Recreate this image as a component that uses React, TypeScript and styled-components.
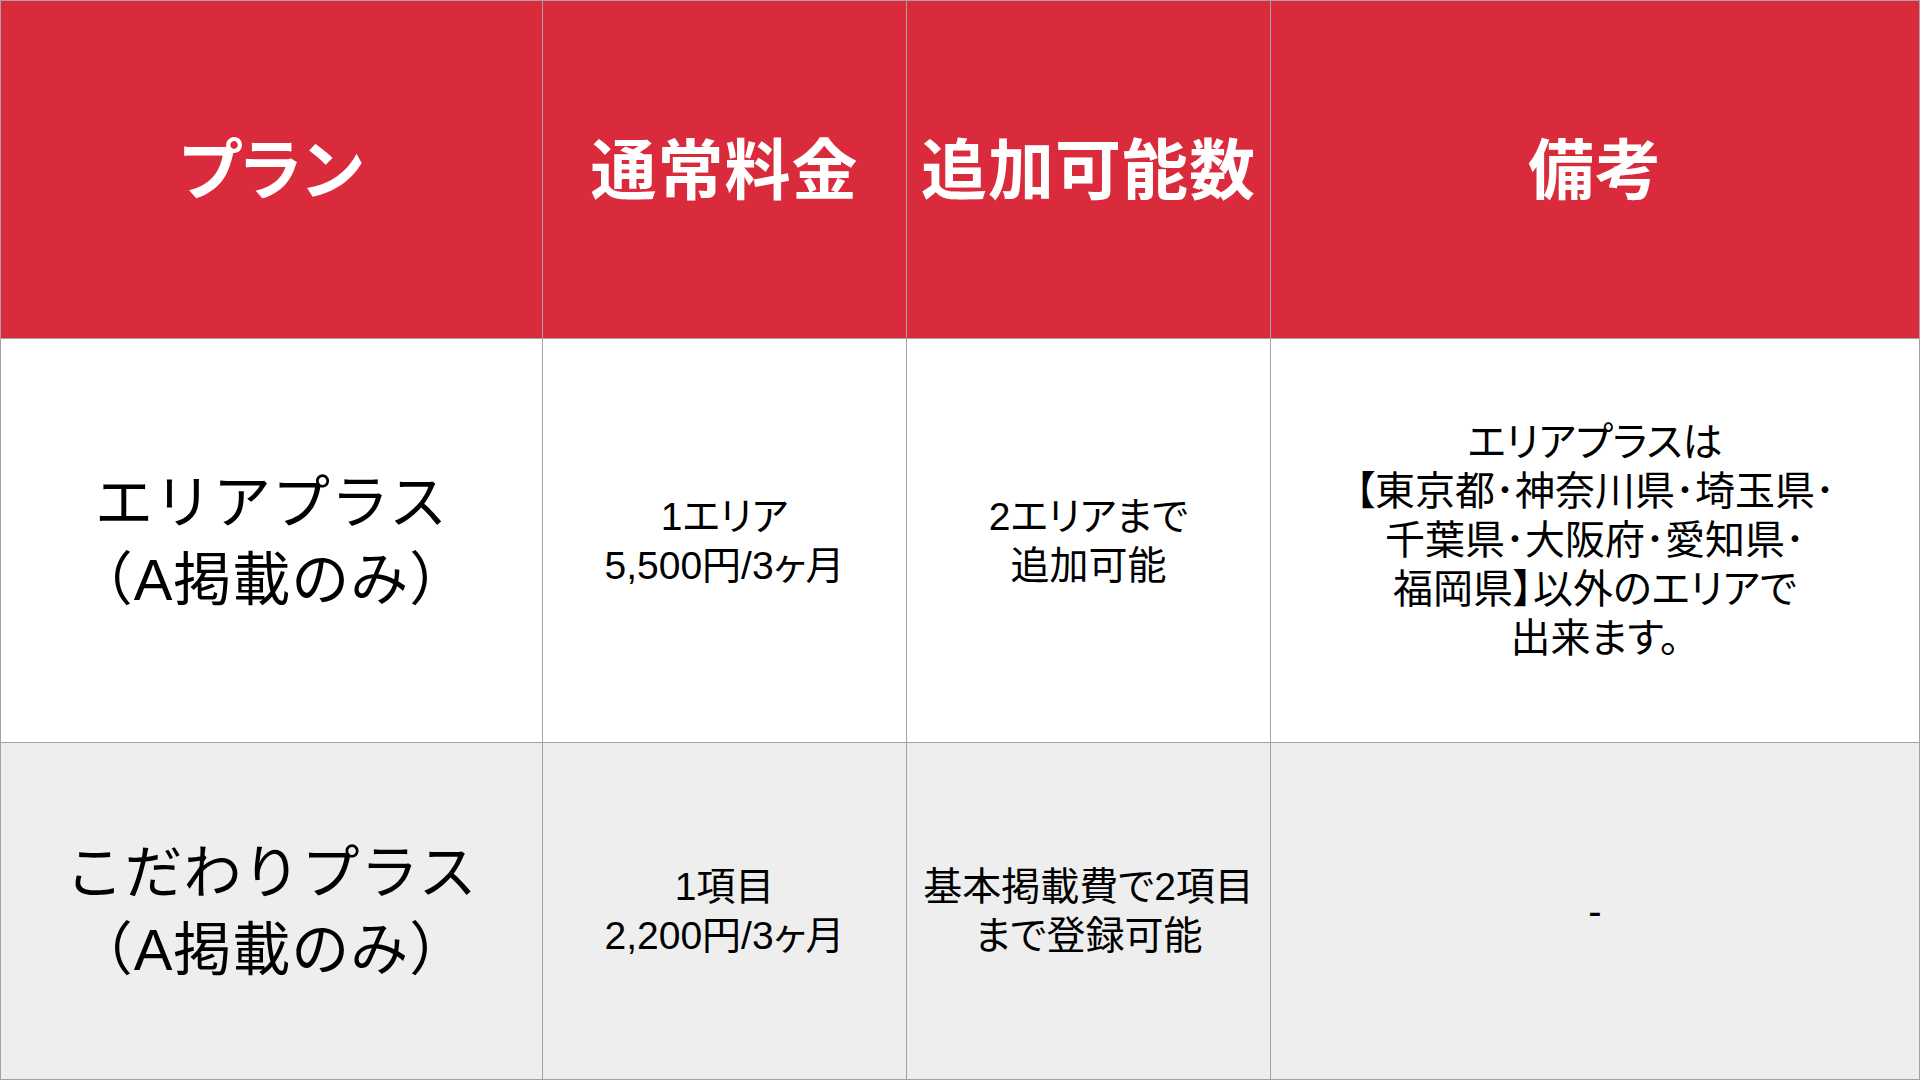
import styled, { createGlobalStyle } from "styled-components"

const GlobalStyle = createGlobalStyle`
  html, body {
    margin: 0;
    padding: 0;
    background: #ffffff;
  }
  body {
    font-family: "Liberation Sans", "Noto Sans CJK JP", sans-serif;
  }
`

interface PlanRow {
  plan: string[]
  price: string[]
  extra: string[]
  note: string[]
}

const rows: PlanRow[] = [
  {
    plan: ["エリアプラス", "（A掲載のみ）"],
    price: ["1エリア", "5,500円/3ヶ月"],
    extra: ["2エリアまで", "追加可能"],
    note: [
      "エリアプラスは",
      "【東京都･神奈川県･埼玉県･",
      "千葉県･大阪府･愛知県･",
      "福岡県】以外のエリアで",
      "出来ます。",
    ],
  },
  {
    plan: ["こだわりプラス", "（A掲載のみ）"],
    price: ["1項目", "2,200円/3ヶ月"],
    extra: ["基本掲載費で2項目", "まで登録可能"],
    note: ["-"],
  },
]

const headers = ["プラン", "通常料金", "追加可能数", "備考"]

const Lines = ({ lines }: { lines: string[] }) => (
  <>
    {lines.map((line) => (
      <Line key={line}>{line}</Line>
    ))}
  </>
)

const App = () => {
  return (
    <>
      <GlobalStyle />
      <Table>
        {headers.map((h) => (
          <HeadCell key={h}>{h}</HeadCell>
        ))}
        {rows.map((row, i) => (
          <Row key={i} striped={i % 2 === 1}>
            <PlanCell>
              <Lines lines={row.plan} />
            </PlanCell>
            <BodyCell>
              <Lines lines={row.price} />
            </BodyCell>
            <BodyCell>
              <Lines lines={row.extra} />
            </BodyCell>
            <NoteCell>
              <Lines lines={row.note} />
            </NoteCell>
          </Row>
        ))}
      </Table>
    </>
  )
}

export default App

const Table = styled.div`
  box-sizing: border-box;
  width: 1920px;
  height: 1080px;
  border: 1px solid #a3a3a3;
  background: #a3a3a3;
  display: grid;
  grid-template-columns: 541px 363px 363px 1fr;
  grid-template-rows: 337px 403px 1fr;
  gap: 1px;
`

const HeadCell = styled.div`
  background: #d92b3b;
  color: #ffffff;
  font-family: "Noto Sans CJK JP", sans-serif;
  font-weight: 700;
  font-size: 66px;
  letter-spacing: 1px;
  font-feature-settings: "palt";
  display: flex;
  align-items: center;
  justify-content: center;
  text-align: center;
  padding-bottom: 10px;
`

interface RowProps {
  striped: boolean
}

const Row = styled.div<RowProps>`
  display: contents;
  & > div {
    background: ${({ striped }) => (striped ? "#eeeeee" : "#ffffff")};
  }
`

const BodyCell = styled.div`
  display: flex;
  flex-direction: column;
  align-items: center;
  justify-content: center;
  text-align: center;
  color: #000000;
  font-size: 39px;
  line-height: 49px;
  font-feature-settings: "palt";
`

const PlanCell = styled(BodyCell)`
  font-size: 58px;
  line-height: 77px;
  font-feature-settings: normal;
  letter-spacing: 1px;
`

const NoteCell = styled(BodyCell)`
  font-size: 40px;
`

const Line = styled.div`
  white-space: nowrap;
`
